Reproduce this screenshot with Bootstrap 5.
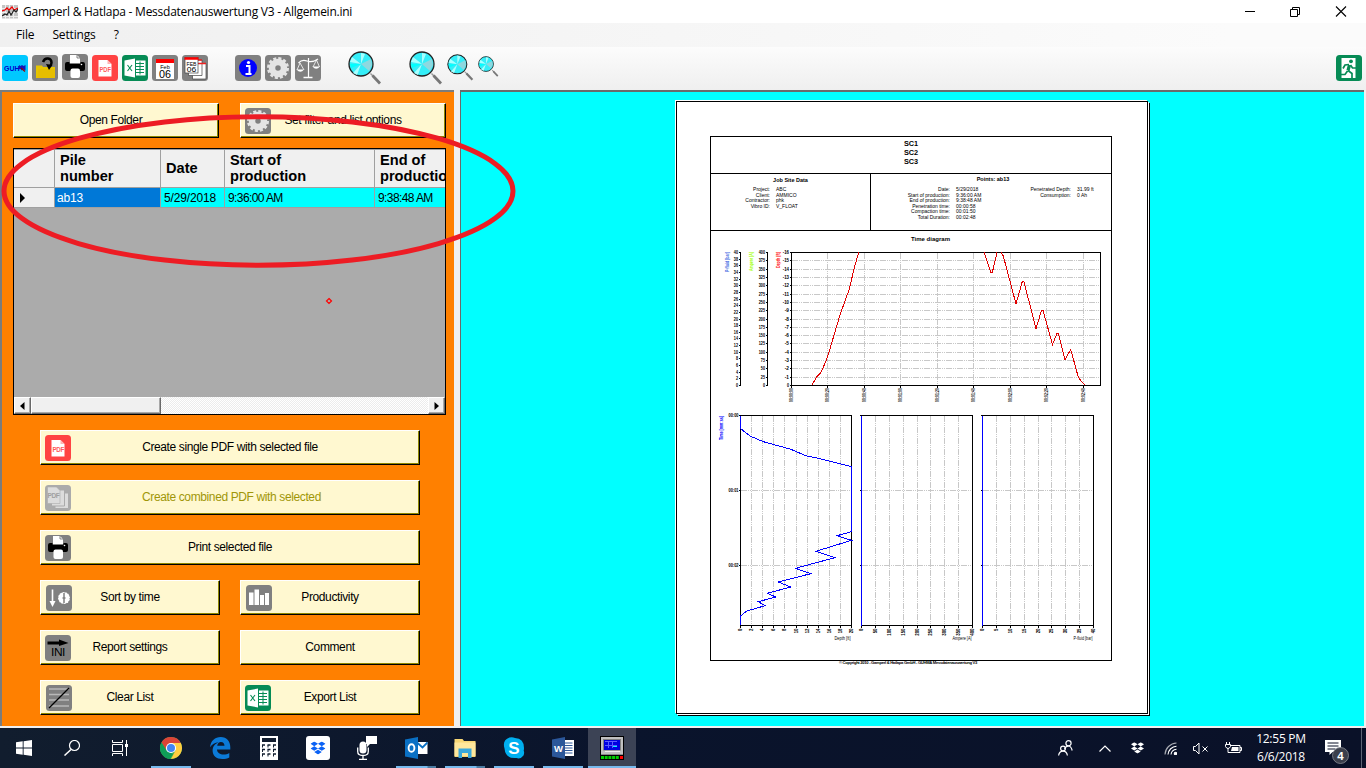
<!DOCTYPE html>
<html lang="en">
<head>
<meta charset="utf-8">
<meta name="viewport" content="width=device-width, initial-scale=1">
<title>Gamperl &amp; Hatlapa - Messdatenauswertung V3</title>
<link rel="stylesheet" href="https://cdn.jsdelivr.net/npm/bootstrap@5.3.0/dist/css/bootstrap.min.css">
<style>
  body{width:1366px;height:768px;overflow:hidden;background:#f0f0f0;color:#000;font-family:"Open Sans",sans-serif;font-size:12px;line-height:16px}
  svg{display:block;flex:none}
  svg text{font-family:"Liberation Sans",sans-serif}
  .titlebar{height:23px;background:#fff;padding-left:2px}
  .titlebar .caption{margin-left:5px;letter-spacing:-.25px}
  .winctl{margin-right:19px;gap:34px}
  .menubar{height:24px;background:linear-gradient(90deg,#f0f0f0,#fbfbfb 90%);padding:0 0 0 16px;gap:18px;letter-spacing:-.15px}
  .toolstrip{height:43px;background:linear-gradient(#fcfcfc,#efefef);padding:8px 4px 0 2px}
  .tools{gap:4px}
  .workspace{height:636px}
  .pane-left{width:454px;background:#ff8000;border:solid #7c7c7c;border-width:2px 0 0 2px;padding:11px 8px 0 11px}
  .pane-right{width:904px;margin-left:6px;background:#0ff;border:solid #6a6a6a;border-width:2px 0 0 1px;padding:9px 0 0 215px}
  .wbtn{height:35px;background:#fff8d0;border:1px solid #fff;border-right-color:#000;border-bottom-color:#000;box-shadow:inset -1px -1px #8f8700;border-radius:0;font:12px/16px "Liberation Sans",sans-serif;color:#000;padding:0 0 2px;position:relative;letter-spacing:-.38px;flex:1 1 0}
  .wbtn svg{position:absolute;left:4px;top:4px}
  .wbtn:disabled{background:#fff8d0;border-color:#fff #000 #000 #fff;color:#a09608;opacity:1}
  .topbtns{gap:21px;height:35px}
  .topbtns .wbtn{flex:0 0 206px}
  .cmds{gap:15px;padding:0 26px 0 27px;margin-top:15px}
  .cmds .pair{gap:20px}
  .gridbox{height:267px;margin-top:10px;border:1px solid #000;background:#ababab}
  .gridbox table{table-layout:fixed;width:531px;border-collapse:separate;border-spacing:0;font-family:"Liberation Sans",sans-serif}
  .gridbox th,.gridbox td{border-right:1px solid #a0a0a0;border-bottom:1px solid #a0a0a0;white-space:nowrap;overflow:hidden}
  .gridbox th{height:39px;background:#f0f0f0;font-size:14.6px;line-height:16px;padding:0 0 2px 5px;vertical-align:middle;border-top:1px solid #a0a0a0}
  .gridbox td{height:20px;background:#0ff;padding:0 0 0 3px;font-size:12px;line-height:18px;letter-spacing:-.15px}
  .gridbox td.clocktime{letter-spacing:-.6px}
  .gridbox td.rowhead{background:#f0f0f0;padding-left:5px}
  .gridbox td.sel{background:#0078d7;color:#fff;padding-left:2px}
  .sbar{height:17px;background:repeating-conic-gradient(#fff 0 25%,#ececec 0 50%) 0 0/2px 2px}
  .sbtn{background:#f0f0f0;border:1px solid #fff;border-right-color:#696969;border-bottom-color:#696969;box-shadow:inset -1px -1px #a8a8a8}
  .sheet{width:472px;height:613px;background:#fff;border:1px solid #000;box-shadow:-1px -1px #fff,1px 1px #fff,2px 2px #000;padding:34px 0 0 33px;font:5px/5.6px "Liberation Sans",sans-serif}
  .report{width:402px;height:525px;border:1px solid #000}
  .rep-title{height:37px;border-bottom:1px solid #000;font:bold 7.3px/9px "Liberation Sans",sans-serif;padding-top:2px}
  .rep-info{height:57px;border-bottom:1px solid #000}
  .rep-job{width:160px;border-right:1px solid #000}
  .rep-h{font-weight:bold;font-size:5.5px;line-height:6px;padding-top:2px;height:13px}
  .kv{display:grid;column-gap:6px}
  .kv :nth-child(odd){text-align:right}
  .repfoot{font-size:4.15px;font-weight:bold;width:396px;line-height:3px;letter-spacing:-.3px;white-space:nowrap}
  .taskbar{height:40px;margin-top:2px;background:linear-gradient(90deg,#111d2e,#0a142c 45%,#0a1128);color:#fff}
  .tbi{width:48px;height:40px;display:flex;align-items:center;justify-content:center;position:relative}
  .open::after{content:"";position:absolute;bottom:0;left:4px;right:4px;height:2px;background:#76b9ed}
  .multi::after{background:linear-gradient(90deg,#76b9ed 31px,#4b7ba2 32px)}
  .active-app{background:#3c4355}
  .active-app::after{left:0;right:0}
  .tray>div{display:flex;justify-content:center;align-items:center;height:40px}
  .clock{line-height:18px;font-size:12px;letter-spacing:-.25px;white-space:nowrap;text-align:center}
  .markup{position:absolute;left:0;top:0;pointer-events:none}
</style>
</head>
<body>
<svg width="0" height="0" class="position-absolute">
  <defs>
    <symbol id="i-pdf" viewBox="0 0 26 26"><rect width="26" height="26" rx="3.5" fill="#ff4343"/><path d="M6.500 5h9l4 4v12.500h-13z" fill="#fff"/><path d="M15.500 5v4h4z" fill="#ffb4b4"/><text x="7.500" y="16.500" font-size="7" font-weight="bold" textLength="11.500" lengthAdjust="spacingAndGlyphs" fill="#ff5a5a">PDF</text></symbol>
    <symbol id="i-pdfs" viewBox="0 0 26 26"><rect width="26" height="26" rx="3.500" fill="#ababab"/><path d="M10 8h13.500v15.500H10z" fill="#dcdcdc" stroke="#ababab"/><path d="M6.500 5h13v16h-13z" fill="#dcdcdc" stroke="#ababab"/><path d="M2.500 2h9l3.500 3.500V18.500H2.500z" fill="#dcdcdc" stroke="#ababab" stroke-width=".6"/><text x="2.500" y="13" font-size="7" font-weight="bold" textLength="12" lengthAdjust="spacingAndGlyphs" fill="#a0a0a0">PDF</text></symbol>
    <symbol id="i-print" viewBox="0 0 26 26"><rect width="26" height="26" rx="3.500" fill="#808080"/><path d="M8 1h7l3 3v6H8z" fill="#fff"/><path d="M15 1v3h3" fill="none" stroke="#555" stroke-width=".7"/><path d="M5 8h2.500v1.500h11V8H21q2 0 2 2v5q0 2-2 2H5q-2 0-2-2v-5q0-2 2-2z" fill="#000"/><circle cx="19.500" cy="10.500" r=".8" fill="#fff"/><rect x="8.500" y="14.500" width="9.500" height="9.500" rx="2" fill="#fff"/></symbol>
    <symbol id="i-xls" viewBox="0 0 26 26"><rect width="26" height="26" rx="3.500" fill="#068b55"/><path d="M2.500 5.500L13 3.500v19L2.500 20.500z" fill="#fff"/><path d="M14 5.500h9.500v15H14z" fill="#fff"/><path d="M14 8.500h8M14 11.500h8M14 14.500h8M14 17.500h8M18 6.500v13" stroke="#068b55" stroke-width="1"/><path d="M5.500 10l4.500 6M10 10l-4.500 6" stroke="#068b55" stroke-width="1.100"/></symbol>
    <symbol id="i-gear" viewBox="0 0 26 26"><rect width="26" height="26" rx="3.500" fill="#808080"/><circle cx="13" cy="13" r="9.500" fill="none" stroke="#e4e4e4" stroke-width="3" stroke-dasharray="3 1.974"/><circle cx="13" cy="13" r="6" fill="none" stroke="#e4e4e4" stroke-width="6.500"/></symbol>
    <symbol id="mag" viewBox="0 0 34 34"><path d="M22.500 22.500l3 3" stroke="#999" stroke-width="1.500"/><path d="M24.500 24.500l7.500 8" stroke="#777" stroke-width="2.800"/><circle cx="13" cy="13" r="12" fill="#35eef8" stroke="#222" stroke-width="1.300"/><path d="M13 13L2 11 4 6zM13 13L5 22 9 24zM13 13L13 2 17 3z" fill="#a8ffff"/><path d="M13 13L23 8 24 14 21 20z" fill="#8ed8df"/><path d="M13 13L2 13 3 17z" fill="#0ff"/></symbol>
    <symbol id="dbx" viewBox="0 0 16 14"><path d="M4 0l4 2.500L4 5 0 2.500zM12 0l4 2.500L12 5 8 2.500zM4 5l4 2.500L4 10 0 7.500zM12 5l4 2.500L12 10 8 7.500zM8 8.800l4 2.400L8 13.800 4 11.200z"/></symbol>
  </defs>
</svg>

<header class="titlebar d-flex align-items-center">
  <svg width="16" height="16" viewBox="0 0 16 16"><rect width="16" height="13.500" y="1" fill="#c4c4c4"/><path d="M0 4.500h16M0 8.500h16M0 12.500h16M3.500 1v14M7.500 1v14M11.500 1v14" stroke="#eee" stroke-width="1"/><path d="M0 7l3-1 2-2 2 2 3-3 2 3 4-2" fill="none" stroke="#e00" stroke-width="1.300"/><path d="M0 12l3-2 2 1 2-4 2 4 3-5 2 2 2-3" fill="none" stroke="#222" stroke-width="1.200"/></svg>
  <span class="caption">Gamperl &amp; Hatlapa - Messdatenauswertung V3 - Allgemein.ini</span>
  <div class="winctl d-flex ms-auto">
    <svg width="12" height="12"><path d="M2 5.500h10" stroke="#000"/></svg>
    <svg width="12" height="12"><path d="M1.500 3.500h7v7h-7zM3.500 3V1.500h7v7H9" fill="none" stroke="#000"/></svg>
    <svg width="12" height="12"><path d="M1 .5l10 10M11 .5L1 10.500" stroke="#000" stroke-width="1.100"/></svg>
  </div>
</header>
<nav class="menubar d-flex align-items-center"><span>File</span><span>Settings</span><span>?</span></nav>

<div class="toolstrip d-flex align-items-start">
  <div class="tools d-flex">
    <svg width="26" height="26"><rect width="26" height="26" rx="3.500" fill="#00c8ff"/><text x="2" y="15.500" font-size="6.500" font-weight="bold" textLength="15.500" lengthAdjust="spacingAndGlyphs" fill="#00c">GUH</text><path d="M17 10l1.500 1 1.500-1 1.500 1 2-1v5.500l-2-1-2 1-1-1.500-2 .5z" fill="#1515b8"/><path d="M19 13l4 3.500" stroke="#900" stroke-width="1.200"/></svg>
    <svg width="26" height="26"><rect width="26" height="26" rx="3.500" fill="#808080"/><path d="M4 10.500h6l1 1.500h12V23H4z" fill="#e6c600"/><path d="M5 23l1.500-9h16.500v9z" fill="#e6be00"/><path d="M11 7Q12.500 3 16 3.500q3.500.5 3.500 4 0 1.500-1 3" fill="none" stroke="#000" stroke-width="2.500"/><path d="M14 9l6.500 1-3.500 5z"/></svg>
    <svg width="26" height="26" style="margin-top:-1px"><use href="#i-print"/></svg>
    <svg width="26" height="26"><use href="#i-pdf"/></svg>
    <svg width="26" height="26"><use href="#i-xls"/></svg>
    <svg width="26" height="26"><rect width="26" height="26" rx="3.500" fill="#808080"/><rect x="4" y="4.500" width="18" height="19.500" fill="#fff"/><rect x="4" y="4" width="18" height="4" fill="#f00"/><text x="13" y="13.500" font-size="5.500" text-anchor="middle">Feb</text><text x="13" y="22.500" font-size="10" text-anchor="middle" textLength="12" lengthAdjust="spacingAndGlyphs">06</text></svg>
    <svg width="26" height="26"><rect width="26" height="26" rx="3.500" fill="#808080"/><path d="M10.500 8.500h13.500v15.500H10.500z" fill="#fff" stroke="#444" stroke-width=".7"/><path d="M6.500 5h13.500v15.500H6.500z" fill="#fff" stroke="#444" stroke-width=".7"/><path d="M6.500 5h13.500M10.500 8.500H24" stroke="#f02020" stroke-width="1.500"/><rect x="3" y="2.500" width="13" height="15.500" fill="#fff" stroke="#444" stroke-width=".7"/><path d="M2.500 3.500h14" stroke="#f00" stroke-width="2.500"/><text x="9.500" y="10.500" font-size="5.500" text-anchor="middle" textLength="10" lengthAdjust="spacingAndGlyphs">FEB</text><text x="9.500" y="17" font-size="8" text-anchor="middle" textLength="9.500" lengthAdjust="spacingAndGlyphs">06</text></svg>
    <svg width="26" height="26" style="margin-left:23px"><rect width="26" height="26" rx="3.500" fill="#808080"/><circle cx="13" cy="13" r="9" fill="#00f"/><circle cx="13.500" cy="7.500" r="1.600" fill="#fff"/><path d="M11 11h3.500v7.500M10.500 19h6" fill="none" stroke="#fff" stroke-width="2"/></svg>
    <svg width="26" height="26"><use href="#i-gear"/></svg>
    <svg width="26" height="26"><rect width="26" height="26" rx="3.500" fill="#808080"/><g fill="none" stroke="#fff"><path d="M3.500 8Q7 4 12 6t11-2M13.500 3v19" stroke-width="1.200"/><path d="M8.500 22.500h9" stroke-width="1.500"/><path d="M5 8L2 15M5 8l4 7M21.500 5L18 12M21.500 5l3 7" stroke-width=".8"/></g><path d="M1.500 14.500h7.500q-3.500 4.500-7.500 0zM17.500 11.500H25q-4 4.500-7.500 0z" fill="#fff"/></svg>
  </div>
  <svg width="34" height="34" style="margin:-4px 0 0 27px"><use href="#mag"/></svg>
  <svg width="34" height="34" style="margin:-4px 0 0 27px"><use href="#mag"/></svg>
  <svg width="27" height="27" style="margin:-1px 0 0 4px"><use href="#mag"/></svg>
  <svg width="21" height="21" style="margin:1px 0 0 4px"><use href="#mag"/></svg>
  <svg width="26" height="26" class="ms-auto"><rect width="26" height="26" rx="3.500" fill="#068b55"/><path d="M5.500 3h14v20h-14z" fill="#fff"/><g fill="none" stroke="#068b55"><circle cx="15" cy="6.300" r="1.900" fill="#068b55" stroke="none"/><path d="M13.500 10L12 15.500" stroke-width="3.200"/><path d="M13 9.500l-4 .5-2 3.500M14.500 10l2 3h3.500M12 15.500l4 3v4.500M11.500 16l-2.500 3.500H3.500" stroke-width="1.700"/></g></svg>
</div>

<main class="workspace d-flex">
  <section class="pane-left flex-shrink-0">
    <div class="topbtns d-flex">
      <button class="wbtn btn" style="padding-right:10px">Open Folder</button>
      <button class="wbtn btn"><svg width="26" height="26"><use href="#i-gear"/></svg>Set filter and list options</button>
    </div>
    <div class="gridbox d-flex flex-column">
      <div class="flex-grow-1 overflow-hidden">
        <table>
          <colgroup><col style="width:41px"><col style="width:106px"><col style="width:64px"><col style="width:150px"><col style="width:170px"></colgroup>
          <thead><tr><th></th><th>Pile<br>number</th><th>Date</th><th>Start of<br>production</th><th>End of<br>production</th></tr></thead>
          <tbody><tr><td class="rowhead"><svg width="8" height="10"><path d="M1 0l5 5-5 5z"/></svg></td><td class="sel">ab13</td><td>5/29/2018</td><td class="clocktime">9:36:00 AM</td><td class="clocktime">9:38:48 AM</td></tr></tbody>
        </table>
      </div>
      <div class="sbar d-flex">
        <div class="sbtn d-flex align-items-center justify-content-center" style="width:17px"><svg width="5" height="8"><path d="M4.500 0v8L0 4z"/></svg></div>
        <div class="sbtn" style="width:130px"></div>
        <div class="sbtn d-flex align-items-center justify-content-center ms-auto" style="width:17px"><svg width="5" height="8"><path d="M.5 0v8L5 4z"/></svg></div>
      </div>
    </div>
    <div class="cmds d-flex flex-column">
      <div class="d-flex"><button class="wbtn btn"><svg width="26" height="26"><use href="#i-pdf"/></svg>Create single PDF with selected file</button></div>
      <div class="d-flex"><button class="wbtn btn" disabled style="padding-left:3px"><svg width="26" height="26"><use href="#i-pdfs"/></svg>Create combined PDF with selected</button></div>
      <div class="d-flex"><button class="wbtn btn"><svg width="26" height="26"><use href="#i-print"/></svg>Print selected file</button></div>
      <div class="pair d-flex">
        <button class="wbtn btn"><svg width="26" height="26" style="left:5px"><rect width="26" height="26" rx="3.500" fill="#808080"/><path d="M6.500 4.500v13" stroke="#fff" stroke-width="1.600"/><path d="M3.500 16h6l-3 6z" fill="#fff"/><circle cx="18" cy="13" r="6" fill="#fff"/><path d="M18 8v10M16.500 13h3" stroke="#808080" stroke-width="1.500"/><circle cx="18" cy="13" r="6" fill="none" stroke="#808080" stroke-width="1" stroke-dasharray="1 2.100"/></svg>Sort by time</button>
        <button class="wbtn btn"><svg width="26" height="26" style="left:5px"><rect width="26" height="26" rx="3.500" fill="#808080"/><path d="M3 7.500h4.500V20H3zM8.500 4.500H13V20H8.500zM14 10h4v10h-4zM19 8h4v12h-4z" fill="#fff"/></svg>Productivity</button>
      </div>
      <div class="pair d-flex">
        <button class="wbtn btn"><svg width="26" height="26"><rect width="26" height="26" rx="3.500" fill="#808080"/><path d="M2.500 6.500H14V4.500L23.500 8 14 11V9.500H2.500z"/><text x="6" y="21" font-size="10.500" textLength="14" lengthAdjust="spacingAndGlyphs">INI</text></svg>Report settings</button>
        <button class="wbtn btn">Comment</button>
      </div>
      <div class="pair d-flex">
        <button class="wbtn btn"><svg width="26" height="26" style="left:5px"><rect width="26" height="26" rx="3.500" fill="#808080"/><path d="M3 4h20M3 9.500h20M3 15h20M3 21h20" stroke="#b8b8b8" stroke-width="1.600"/><path d="M3 23L23 3" stroke="#000" stroke-width="1.200"/></svg>Clear List</button>
        <button class="wbtn btn"><svg width="26" height="26"><use href="#i-xls"/></svg>Export List</button>
      </div>
    </div>
  </section>

  <section class="pane-right">
    <div class="sheet">
      <div class="report">
        <div class="rep-title text-center">SC1<br>SC2<br>SC3</div>
        <div class="rep-info d-flex">
          <div class="rep-job">
            <div class="rep-h text-center" style="padding-top:3px">Job Site Data</div>
            <div class="kv" style="grid-template-columns:59px 1fr">
              <span>Project:</span><span>ABC</span><span>Client:</span><span>AMMICO</span><span>Contractor:</span><span>phk</span><span>Vibro ID:</span><span>V_FLOAT</span>
            </div>
          </div>
          <div class="flex-grow-1">
            <div class="rep-h text-center" style="margin-left:4px">Points: ab13</div>
            <div class="d-flex">
              <div class="kv" style="grid-template-columns:79px 38px">
                <span>Date:</span><span>5/29/2018</span><span>Start of production:</span><span>9:36:00 AM</span><span>End of production:</span><span>9:38:48 AM</span><span>Penetration time:</span><span>00:00:58</span><span>Compaction time:</span><span>00:01:50</span><span>Total Duration:</span><span>00:02:48</span>
              </div>
              <div class="kv align-content-start" style="grid-template-columns:77px 30px">
                <span>Penetrated Depth:</span><span>31.99 ft</span><span>Consumption:</span><span>0 Ah</span>
              </div>
            </div>
          </div>
        </div>
        <svg id="plots" width="400" height="429" viewBox="711 231 400 429" shape-rendering="crispEdges"></svg>
      </div>
      <div class="repfoot text-center">© Copyright 2010 - Gamperl &amp; Hatlapa GmbH - GUHMA Messdatenauswertung V3</div>
    </div>
  </section>
</main>

<footer class="taskbar d-flex">
  <div class="tbi"><svg width="16" height="16"><path d="M0 2.300L6.700 1.300V7.600H0zM7.600 1.200L16 0v7.600H7.600zM0 8.500h6.700v6.300L0 13.800zM7.600 8.500H16V16l-8.400-1.200z" fill="#fff"/></svg></div>
  <div class="tbi"><svg width="16" height="16" fill="none" stroke="#fff"><circle cx="10.500" cy="5.500" r="5" stroke-width="1.200"/><path d="M7 9.500L.5 15.500" stroke-width="1.500"/></svg></div>
  <div class="tbi"><svg width="17" height="16" fill="none" stroke="#fff"><path d="M.5 0v2.500h10V0M.5 16v-2.500h10V16M.5 4.500h10v7H.5zM14.500 0v16" /><path d="M13 4h3v3h-3z" fill="#fff" stroke="none"/></svg></div>
  <div class="d-flex" style="gap:1px;margin-left:3px">
    <div class="tbi open"><svg width="22" height="22" viewBox="-11 -11 22 22"><circle r="11" fill="#4caf50"/><path d="M0 0L-9.500-5.500A11 11 0 0 1 9.800-5H0z" fill="#db4437"/><path d="M0-5H9.800A11 11 0 0 1 0 11L4.500 2.500z" fill="#ffcd40"/><path d="M-9.500-5.500L-4.500 2.500 0 0V-6z" fill="#db4437"/><path d="M-9.500-5.500L-4.500 2.500 0 5 2 6-1 11A11 11 0 0 1-9.500-5.500z" fill="#0f9d58"/><circle r="5.100" fill="#fff"/><circle r="4" fill="#4285f4"/></svg></div>
    <div class="tbi"><svg width="21" height="22" viewBox="0 0 21 22"><path d="M0 10.200C.8 3.700 5 0 10.700 0 17 0 20.300 4.700 20.300 10v2.500H7c.2 3.500 3.200 5 6.500 5 2.300 0 4.200-.6 5.800-1.600v4.500c-2 1-4.200 1.600-7 1.600-6 0-9.700-3.300-9.700-8.500C2.600 9.600 5 6.700 8.500 5.200 5 5.500 2 7.300 0 10.200zM7.200 8.800h7.300C14.400 6.500 13.200 5 10.900 5 8.900 5 7.500 6.700 7.200 8.800z" fill="#0b7ad8"/></svg></div>
    <div class="tbi"><svg width="18" height="24"><rect width="18" height="24" fill="#fff"/><path d="M2 2h14v4H2z" fill="#111c2e"/><path d="M2 9h3M7.500 9h3M13 9h3M2 13.500h3M7.500 13.500h3M13 13.500h3M2 18h3M7.500 18h3M13 18h3" stroke="#111c2e" stroke-width="1.500"/><path d="M2.500 9v2.500M8 9v2.500M13.500 9v2.500M2.500 13.500V16M8 13.500V16M13.500 13.500V16M2.500 18v2.500M8 18v2.500M13.500 18v2.500" stroke="#111c2e"/></svg></div>
    <div class="tbi"><svg width="24" height="24"><rect width="24" height="24" rx="3" fill="#fff"/><svg x="4.500" y="5" width="15" height="14" viewBox="0 0 16 14"><use href="#dbx" fill="#0b62f5"/></svg></svg></div>
    <div class="tbi"><svg width="20" height="24"><path d="M9 0h11v8h-7l-3 3V8H9z" fill="#fff"/><rect x="2.500" y="5.500" width="7" height="12" rx="3.500" fill="#fff"/><path d="M.7 11.500v4q0 4 5.300 4t5.300-4v-4M6 20v3M2 23.300h8" fill="none" stroke="#fff" stroke-width="1.300"/></svg></div>
    <div class="tbi open multi"><svg width="23" height="22"><path d="M12 5h10.500v12H12z" fill="#fff"/><path d="M12 5.500l5.500 5L22.500 5.500" fill="none" stroke="#0a70c4" stroke-width="1.800"/><path d="M0 2.500L13 0v22L0 19.500z" fill="#0a70c4"/><ellipse cx="6.500" cy="11" rx="2.900" ry="3.800" fill="none" stroke="#fff" stroke-width="1.900"/></svg></div>
    <div class="tbi open multi"><svg width="22" height="20"><path d="M.5 1h8l1.500 2H21.500v16H.5z" fill="#f8d775"/><path d="M.5 4.500h21V18H.5z" fill="#ffe79c"/><path d="M4.500 20v-9.500h13V20h-3.500v-5H8v5z" fill="#3aa8dc"/></svg></div>
    <div class="tbi open"><svg width="22" height="22"><path d="M6.500.5q3-.8 5.500.5 9 .5 9 10 0 1.500-.3 2.500 1 2.500-.2 5-3 4-7 2.500-11 1-12-9.500Q-1 3 6.500.5z" fill="#00aff0"/><text x="11" y="17" text-anchor="middle" font-size="17" font-weight="bold" fill="#fff">S</text></svg></div>
    <div class="tbi open"><svg width="22" height="22"><path d="M11 3h11v16H11z" fill="#fff"/><path d="M13 6h7.500M13 8.500h7.500M13 11h7.500M13 13.500h7.500M13 16h7.500" stroke="#2b579a"/><path d="M0 2.500L13 0v22L0 19.500z" fill="#2b579a"/><text x="6.500" y="14.500" text-anchor="middle" font-size="9.500" font-weight="bold" fill="#fff">W</text></svg></div>
    <div class="tbi open active-app"><svg width="24" height="24"><path d="M0 0h24v24H0z" fill="#000"/><path d="M1 1h22v17H1z" fill="#c0c0c0"/><path d="M3 3h18v11.500H3z" fill="#808080"/><path d="M4 4h16v10H4z" fill="#0000e0"/><path d="M5 5.500h12M5 9.500h12M8.500 5v7M12.500 5v7" stroke="#5a5aff"/><path d="M13 10.500h4" stroke="#0ff"/><path d="M5 15.500h15" stroke="#eee"/><path d="M1 18.500h22" stroke="#888"/><path d="M1 21.500h18" stroke="#00d000" stroke-width="3" stroke-dasharray="3 .7"/><path d="M20 21.500h3" stroke="#f00" stroke-width="3"/></svg></div>
  </div>
  <div class="tray d-flex ms-auto">
    <div style="width:40px"><svg width="15" height="16" fill="none" stroke="#fff" stroke-width="1.200"><circle cx="10.500" cy="3.200" r="2.600"/><path d="M6.500 9q1.500-3 4-3t3.700 4.500"/><circle cx="5" cy="8.500" r="2.400"/><path d="M.6 15.500q.6-4.300 4.400-4.300t4.400 4.300"/></svg></div>
    <div style="width:40px"><svg width="12" height="7"><path d="M.5 6.500L6 1l5.500 5.500" fill="none" stroke="#fff" stroke-width="1.200"/></svg></div>
    <div style="width:24px"><svg width="13" height="12" viewBox="0 0 16 14" fill="#fff"><use href="#dbx"/></svg></div>
    <div style="width:42px"><svg width="13" height="13" fill="none" stroke="#fff" stroke-width="1.100"><path d="M1 12.500A12 12 0 0 1 12.500 1" opacity=".65"/><path d="M4 12.500A9 9 0 0 1 12.500 4.200M7 12.500a6 6 0 0 1 5.500-5.300"/><circle cx="11.500" cy="11.500" r="1.200" fill="#fff"/></svg></div>
    <div style="width:18px"><svg width="15" height="13" fill="none" stroke="#fff"><path d="M.5 4.500h2l3.500-3.500v11L2.500 8.500h-2zM9.500 4.500l5 5M14.500 4.500l-5 5"/></svg></div>
    <div style="width:48px"><svg width="17" height="12" fill="none" stroke="#fff"><path d="M5.500 3.500h9.500v7H4.500M15 5.500h1.500v3H15M1.500 0v2M4.500 0v2M.5 2.500h5v2q-1 2-2.500 2t-2.500-2zM3 6v4.500h2"/><path d="M7 5h6.500v4H6z" fill="#fff" stroke="none"/></svg></div>
    <div style="width:48px"><div class="clock">12:55 PM<br>6/6/2018</div></div>
    <div style="width:56px"><svg width="26" height="26" style="margin:5px 0 0 7px"><path d="M1 2h16v12H8.500l-3 3v-3H1z" fill="#fff"/><path d="M3.500 5h11M3.500 8h11M3.500 11h8" stroke="#0a1128"/><circle cx="16.500" cy="17.500" r="8" fill="#3b3f4c" stroke="#8a8d96" stroke-width=".8"/><text x="16.500" y="21.500" font-size="11.500" font-weight="bold" text-anchor="middle" fill="#fff">4</text></svg></div>
    <div style="width:5px;border-left:1px solid #5d6474"></div>
  </div>
</footer>

<svg class="markup" width="520" height="310" fill="none" stroke="#ed1c24"><ellipse cx="258.500" cy="191" rx="254.500" ry="74.300" stroke-width="5"/><path d="M329 298.500l2.500 2.500-2.500 2.500-2.500-2.500z" stroke="#f00" stroke-width="1.200"/></svg>

<script>
const out = [];
const line = (x1,y1,x2,y2,c='#000',d='') => out.push(`<path d="M${x1} ${y1}L${x2} ${y2}" stroke="${c}" fill="none"${d?` stroke-dasharray="${d}"`:''}/>`);
const label = (s,x,y,len,o={}) => out.push(`<text x="${x}" y="${y}" font-size="${o.size||4.5}" font-weight="${o.w||'bold'}" fill="${o.c||'#000'}" text-anchor="${o.a||'end'}" textLength="${len}" lengthAdjust="spacingAndGlyphs"${o.r?` transform="rotate(${o.r} ${x} ${y})"`:''}>${s}</text>`);
const frame = (x,y,w,h) => out.push(`<rect x="${x}" y="${y}" width="${w}" height="${h}" fill="none" stroke="#000"/>`);
const curve = (pts,c) => out.push(`<polyline points="${pts}" fill="none" stroke="${c}"/>`);
const GRID = '#c8c8c8', DOTS = '6 1 1 1 1 1';

// time diagram
label('Time diagram', 930.5, 241, 39, {a:'middle', size:5.5});
const T = 252.5, B = 385.5, L = 791.5, R = 1100.5;
for (let i = 1; i < 16; i++) { const y = Math.round(B - i*(B-T)/16 - .5) + .5; line(L, y, R, y, GRID, DOTS); }
for (let i = 1; i <= 8; i++) { const x = Math.round(L + i*36.45 - .5) + .5; line(x, T, x, B, GRID, DOTS); }
frame(L, T, R-L, B-T);
const axis = (x, n, step, sign) => {
  line(x, T, x, B);
  for (let i = 0; i <= n; i++) {
    const y = Math.round(B - i*(B-T)/n - .5) + .5, s = (i && sign ? '-' : '') + i*step;
    line(x-2, y, x, y);
    label(s, x-2.500, y+1.500, s.length*2.1);
  }
};
axis(740.5, 20, 2); axis(767.5, 16, 25); axis(791.5, 16, 1, true);
label('P-fluid [bar]', 728.5, 252, 20, {r:-90, c:'#4169e1'});
label('Ampere [A]', 752.5, 252, 19, {r:-90, c:'#9cff00'});
label('Depth [ft]', 779.5, 252, 16, {r:-90, c:'#f00'});
for (let i = 0; i <= 8; i++) {
  const x = Math.round(L + i*36.45 - .5) + .5, s = i*20;
  line(x, B, x, B+2);
  label(`00:0${Math.floor(s/60)}:${String(s%60).padStart(2,'0')}`, x+1.5, B+2.500, 14, {r:-90});
}
curve('812,385 816.7,377 820.7,373 826,361 828.7,353 840,315 849.3,289 854,269 858.7,252.5','#e00000');
curve('984.3,252.500 990.7,272.500 992.3,272.500 997,252.500','#e00000');
curve('1001.3,252.500 1003.3,256 1016,304 1022.300,281.500 1024,282 1036,328.500 1041.500,310.500 1043,310.500 1052.500,344.500 1057,333.500 1058.500,334 1065,359.500 1070.700,349.500 1077.700,375 1080,379.700 1085,385','#e00000');

// profile diagrams over time
const PT = 415.5, PB = 625.5;
const profile = (x, n, step, title, len) => {
  const w = 111;
  for (let i = 1; i < n; i++) { const gx = Math.round(x + i*w/n - .5) + .5; line(gx, PT, gx, PB, GRID, DOTS); }
  [490.5, 565.5].forEach(y => line(x, y, x+w, y, GRID, DOTS));
  frame(x, PT, w, PB-PT);
  [PT, 490.5, 565.5].forEach(y => line(x-2, y, x, y));
  for (let i = 0; i <= n; i++) {
    const gx = Math.round(x + i*w/n - .5) + .5, s = String(i*step);
    line(gx, PB, gx, PB+2);
    label(s, gx+1.5, PB+3, s.length*2.4, {r:-90});
  }
  label(title, x+w-1, 640, len, {w:'normal', size:5});
};
profile(740.5, 10, 2, 'Depth [ft]', 16);
profile(861.5, 8, 50, 'Ampere [A]', 19);
profile(982.5, 8, 5, 'P-fluid [bar]', 19);
['00:00','00:01','00:02'].forEach((s,i) => label(s, 738.5, 417 + i*75, 10));
label('Time [mm:ss]', 722.5, 416, 24, {r:-90, c:'#00f'});
line(861.5, PT, 861.5, PB, '#00f'); line(982.5, PT, 982.5, PB, '#00f');
curve('740.5,416 740.5,428.3 743.5,431 750,436 763.3,441.7 790,449 806.7,456 820,458.700 851.5,466.7 851.5,531.7 837,535.7 851.5,540.3 816,551.3 834.7,557.7 795.5,568.3 810.7,573.7 778.3,582 790.7,587 767.3,593.3 775.7,597 758.3,601.7 765,605.7 746.7,611 740.5,616 740.5,625','#00f');
document.getElementById('plots').innerHTML = out.join('');
</script>
<script src="https://cdn.jsdelivr.net/npm/bootstrap@5.3.0/dist/js/bootstrap.bundle.min.js"></script>
</body>
</html>
